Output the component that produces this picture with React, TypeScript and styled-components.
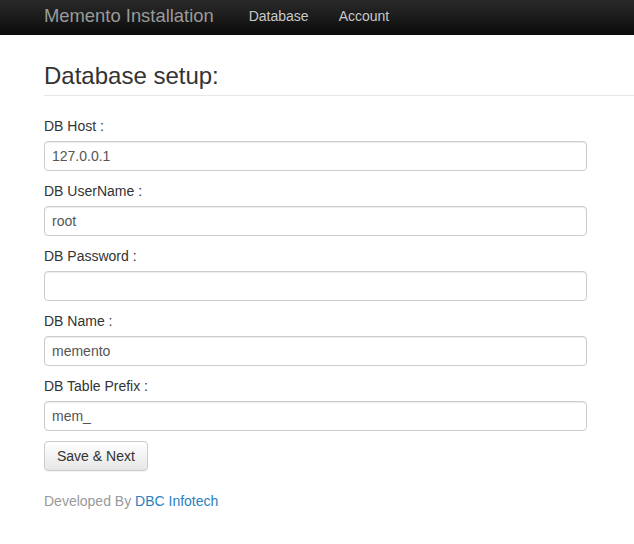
import React from 'react';
import styled, { createGlobalStyle } from 'styled-components';

const GlobalStyle = createGlobalStyle`
  html, body {
    margin: 0;
    padding: 0;
    background: #fff;
    font-family: "Liberation Sans", Arial, sans-serif;
    font-size: 14px;
    color: #333;
  }
`;

const Navbar = styled.div`
  height: 35px;
  background: linear-gradient(to bottom, #2a2a2a, #0b0b0b);
  display: flex;
  align-items: center;
  padding-left: 44px;
  box-sizing: border-box;
`;

const Brand = styled.a`
  color: #9a9a9a;
  font-size: 18.4px;
  text-decoration: none;
  margin-right: 35px;
  margin-top: -3px;
`;

const NavLink = styled.a`
  color: #cacaca;
  font-size: 14px;
  text-decoration: none;
  margin-right: 30px;
  margin-top: -3px;
  text-shadow: 0 -1px 0 rgba(0, 0, 0, 0.25);
`;

const Main = styled.div`
  padding-left: 44px;
`;

const Header = styled.div`
  border-bottom: 1px solid #e6e6e6;
  padding: 27px 0 5px;
  margin-bottom: 20px;
`;

const Title = styled.h1`
  margin: 0;
  font-size: 24px;
  font-weight: normal;
  color: #333;
  line-height: 28px;
`;

const Form = styled.form`
  width: 543px;
  display: flex;
  flex-direction: column;
`;

const Field = styled.div`
  display: flex;
  flex-direction: column;
  margin-bottom: 10px;
`;

const Label = styled.label`
  font-size: 14px;
  line-height: 20px;
  margin-bottom: 5px;
  color: #333;
`;

const Input = styled.input`
  height: 30px;
  box-sizing: border-box;
  border: 1px solid #ccc;
  border-radius: 4px;
  padding: 0 7px;
  font-family: "Liberation Sans", Arial, sans-serif;
  font-size: 14px;
  color: #555;
  box-shadow: inset 0 1px 1px rgba(0, 0, 0, 0.075);
  outline: none;
`;

const Button = styled.button`
  align-self: flex-start;
  height: 30px;
  padding: 0 12px;
  border: 1px solid #ccc;
  border-radius: 4px;
  background: linear-gradient(to bottom, #ffffff, #e6e6e6);
  font-family: "Liberation Sans", Arial, sans-serif;
  font-size: 14px;
  color: #333;
  box-shadow: 0 1px 1px rgba(0, 0, 0, 0.05);
`;

const Footer = styled.p`
  margin: 22px 0 0;
  color: #999;
  font-size: 14px;
`;

const FooterLink = styled.a`
  color: #2a7fc0;
  text-decoration: none;
`;

const fields = [
  { label: 'DB Host :', value: '127.0.0.1' },
  { label: 'DB UserName :', value: 'root' },
  { label: 'DB Password :', value: '', type: 'password' },
  { label: 'DB Name :', value: 'memento' },
  { label: 'DB Table Prefix :', value: 'mem_' },
];

export default function App() {
  return (
    <>
      <GlobalStyle />
      <Navbar>
        <Brand href="#">Memento Installation</Brand>
        <NavLink href="#">Database</NavLink>
        <NavLink href="#">Account</NavLink>
      </Navbar>
      <Main>
        <Header>
          <Title>Database setup:</Title>
        </Header>
        <Form onSubmit={e => e.preventDefault()}>
          {fields.map(f => (
            <Field key={f.label}>
              <Label>{f.label}</Label>
              <Input type={f.type || 'text'} defaultValue={f.value} />
            </Field>
          ))}
          <Button type="submit">Save &amp; Next</Button>
        </Form>
        <Footer>
          Developed By <FooterLink href="#">DBC Infotech</FooterLink>
        </Footer>
      </Main>
    </>
  );
}
